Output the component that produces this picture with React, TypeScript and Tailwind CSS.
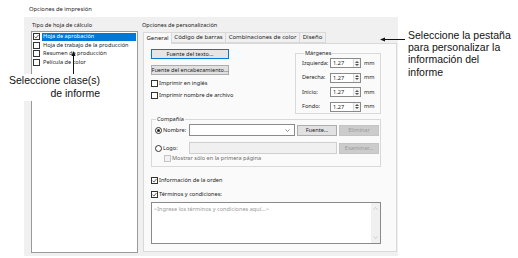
import React from "react";

const ui = { fontFamily: '"Noto Sans", "Liberation Sans", sans-serif' };
const ann = { fontFamily: '"Liberation Sans", Arial, sans-serif' };

function Check({ checked, disabled }: { checked?: boolean; disabled?: boolean }) {
  return (
    <span
      className={`w-[7px] h-[7px] border shrink-0 flex items-center justify-center ${
        disabled ? "border-[#c4c4c4] bg-[#f2f2f2]" : "border-[#333333] bg-white"
      }`}
    >
      {checked && (
        <svg width="5" height="5" viewBox="0 0 10 10">
          <path d="M1 5.2 L3.9 8.2 L9 1.8" stroke="#333" strokeWidth="1.5" fill="none" />
        </svg>
      )}
    </span>
  );
}

function Radio({ checked }: { checked?: boolean }) {
  return (
    <span className="w-[7px] h-[7px] rounded-full border border-[#333333] bg-white shrink-0 flex items-center justify-center">
      {checked && <span className="w-[3px] h-[3px] rounded-full bg-[#222]" />}
    </span>
  );
}

function Spin({ label }: { label: string }) {
  return (
    <div className="flex items-center h-[10px]">
      <span className="w-[28px]">{label}</span>
      <div className="w-[31px] h-[10px] border border-[#8a8a8a] bg-white flex">
        <span className="flex-1 pl-[2px] leading-[8px]">1.27</span>
        <div className="w-[7px] flex flex-col items-center justify-center gap-[1px] bg-[#f4f4f4] border-l border-[#dcdcdc]">
          <svg width="4" height="2" viewBox="0 0 4 2">
            <path d="M0 2 L2 0 L4 2 Z" fill="#555" />
          </svg>
          <svg width="4" height="2" viewBox="0 0 4 2">
            <path d="M0 0 L2 2 L4 0 Z" fill="#555" />
          </svg>
        </div>
      </div>
      <span className="ml-[3px]">mm</span>
    </div>
  );
}

export default function App() {
  const rows = [
    "Hoja de aprobación",
    "Hoja de trabajo de la producción",
    "Resumen de producción",
    "Película de color",
  ];
  return (
    <div className="w-[518px] h-[258px] bg-white relative overflow-hidden text-[#222] whitespace-nowrap" style={ui}>
      <div className="pl-[29px] pt-[6px] h-[17px] text-[5.8px] leading-[7px]">Opciones de impresión</div>
      <div className="ml-[24px] w-[374px] h-[239px] bg-[#f0f0f0] flex pl-[7px] pt-[5px] gap-[4px] text-[5.6px] leading-[7px]">
        {/* left column */}
        <div className="w-[107px] flex flex-col">
          <div className="h-[9px] pl-[1px]">Tipo de hoja de cálculo</div>
          <div className="h-[222px] bg-white border border-[#9a9a9a] pt-[0.5px] pr-[1px] flex flex-col">
            {rows.map((r, i) => (
              <div key={r} className="h-[8.6px] flex items-center pl-[1px]">
                <Check checked={i === 0} />
                <span
                  className={`ml-[2px] flex-1 h-[7.5px] flex items-center pl-[1px] ${
                    i === 0 ? "bg-[#0078d7] text-white" : ""
                  }`}
                >
                  {r}
                </span>
              </div>
            ))}
          </div>
        </div>
        {/* right column */}
        <div className="w-[255px] flex flex-col">
          <div className="h-[10px]">Opciones de personalización</div>
          <div className="h-[11px] flex items-end ml-[1px] text-[6px]">
            <div className="w-[29px] h-[12px] bg-[#fafafa] border border-b-0 border-[#d9d9d9] flex items-center justify-center relative top-[1px]">
              General
            </div>
            <div className="w-[54px] h-[11px] border border-l-0 border-[#d9d9d9] flex items-center justify-center">
              Código de barras
            </div>
            <div className="w-[74px] h-[11px] border border-l-0 border-[#d9d9d9] flex items-center justify-center">
              Combinaciones de color
            </div>
            <div className="w-[26px] h-[11px] border border-l-0 border-[#d9d9d9] flex items-center justify-center">
              Diseño
            </div>
          </div>
          <div className="h-[209px] ml-[1px] bg-[#fafafa] border border-[#d9d9d9] pl-[7px] pr-[15px] pt-[5px] flex flex-col">
            {/* top section */}
            <div className="flex justify-between">
              <div className="flex flex-col w-[140px]">
                <div className="w-[78px] h-[10px] bg-[#e5e5e5] border border-[#0078d7] flex items-center justify-center">
                  Fuente del texto...
                </div>
                <div className="w-[78px] h-[10px] mt-[6px] bg-[#e1e1e1] border border-[#adadad] flex items-center justify-center">
                  Fuente del encabezamiento...
                </div>
                <div className="flex items-center gap-[1px] mt-[5px] h-[7px]">
                  <Check />
                  <span>Imprimir en inglés</span>
                </div>
                <div className="flex items-center gap-[1px] mt-[5px] h-[7px]">
                  <Check />
                  <span>Imprimir nombre de archivo</span>
                </div>
              </div>
              <fieldset className="w-[86px] h-[64px] border border-[#d9d9d9] pl-[6px] pr-0 pt-0 pb-0 mt-[1px] flex flex-col">
                <legend className="px-[1px] ml-[2px] leading-[7px]">Márgenes</legend>
                <div className="mt-[1px] flex flex-col gap-[4.6px]">
                  <Spin label="Izquierda:" />
                  <Spin label="Derecha:" />
                  <Spin label="Inicio:" />
                  <Spin label="Fondo:" />
                </div>
              </fieldset>
            </div>
            {/* Compañía */}
            <fieldset className="w-[230px] h-[51px] mt-[2px] border border-[#d9d9d9] pl-[3px] pr-0 pt-0 pb-0">
              <legend className="px-[1px] ml-[1px] leading-[7px]">Compañía</legend>
              <div className="flex items-center h-[12px] mt-[1px]">
                <div className="w-[34px] flex items-center gap-[1px]">
                  <Radio checked />
                  <span>Nombre:</span>
                </div>
                <div className="w-[106px] h-[12px] bg-white border border-[#8a8a8a] flex items-center justify-end pr-[4px]">
                  <svg width="5" height="3" viewBox="0 0 5 3">
                    <path d="M0.5 0.5 L2.5 2.5 L4.5 0.5" stroke="#666" strokeWidth="0.7" fill="none" />
                  </svg>
                </div>
                <div className="ml-[2px] w-[40px] h-[11px] bg-[#e1e1e1] border border-[#adadad] flex items-center justify-center">
                  Fuente...
                </div>
                <div className="ml-[2px] w-[40px] h-[11px] bg-[#cccccc] border border-[#c4c4c4] text-[#9a9a9a] flex items-center justify-center">
                  Eliminar
                </div>
              </div>
              <div className="flex items-center h-[12px] mt-[6px]">
                <div className="w-[34px] flex items-center gap-[1px]">
                  <Radio />
                  <span>Logo:</span>
                </div>
                <div className="w-[148px] h-[12px] bg-[#f0f0f0] border border-[#cfcfcf]" />
                <div className="ml-[2px] w-[40px] h-[11px] bg-[#cccccc] border border-[#c4c4c4] text-[#9a9a9a] flex items-center justify-center">
                  Examinar...
                </div>
              </div>
              <div className="flex items-center h-[7px] mt-[1px] pl-[9px] gap-[1px] text-[#6d6d6d]">
                <Check disabled />
                <span>Mostrar sólo en la primera página</span>
              </div>
            </fieldset>
            <div className="flex items-center gap-[1px] mt-[10px] h-[7px]">
              <Check checked />
              <span>Información de la orden</span>
            </div>
            <div className="flex items-center gap-[1px] mt-[7px] h-[7px]">
              <Check checked />
              <span>Términos y condiciones:</span>
            </div>
            <div className="w-[230px] h-[42px] mt-[4px] bg-white border border-[#8a8a8a] flex">
              <div className="flex-1 pl-[2px] pt-[3px] text-[#9a9a9a]">&lt;Ingrese los términos y condiciones aquí...&gt;</div>
              <div className="w-[9px] bg-[#f0f0f0] flex flex-col items-center justify-between py-[4px]">
                <svg width="5" height="3" viewBox="0 0 5 3">
                  <path d="M0.5 2.5 L2.5 0.5 L4.5 2.5" stroke="#bbb" strokeWidth="0.7" fill="none" />
                </svg>
                <svg width="5" height="3" viewBox="0 0 5 3">
                  <path d="M0.5 0.5 L2.5 2.5 L4.5 0.5" stroke="#bbb" strokeWidth="0.7" fill="none" />
                </svg>
              </div>
            </div>
          </div>
        </div>
      </div>

      {/* annotation: left */}
      <svg className="absolute left-[70px] top-[50px]" width="7" height="27" viewBox="0 0 7 27">
        <path d="M3.5 2 L3.5 27" stroke="#111" strokeWidth="1" />
        <path d="M3.5 1 L1.5 6 L5.5 6 Z" fill="#111" />
      </svg>
      <div
        className="absolute left-0 top-[74px] w-[102px] h-[27px] bg-white text-right pr-[2px] text-[10.5px] leading-[13px] text-[#111]"
        style={ann}
      >
        Seleccione clase(s)
        <br />
        de informe
      </div>

      {/* annotation: right */}
      <svg className="absolute left-[378px] top-[36px]" width="28" height="7" viewBox="0 0 28 7">
        <path d="M4 3.5 L27 3.5" stroke="#111" strokeWidth="1" />
        <path d="M2 3.5 L7 1.5 L7 5.5 Z" fill="#111" />
      </svg>
      <div
        className="absolute left-[408px] top-[29px] text-[10.5px] leading-[12.2px] text-[#111]"
        style={ann}
      >
        Seleccione la pestaña
        <br />
        para personalizar la
        <br />
        información del
        <br />
        informe
      </div>
    </div>
  );
}
